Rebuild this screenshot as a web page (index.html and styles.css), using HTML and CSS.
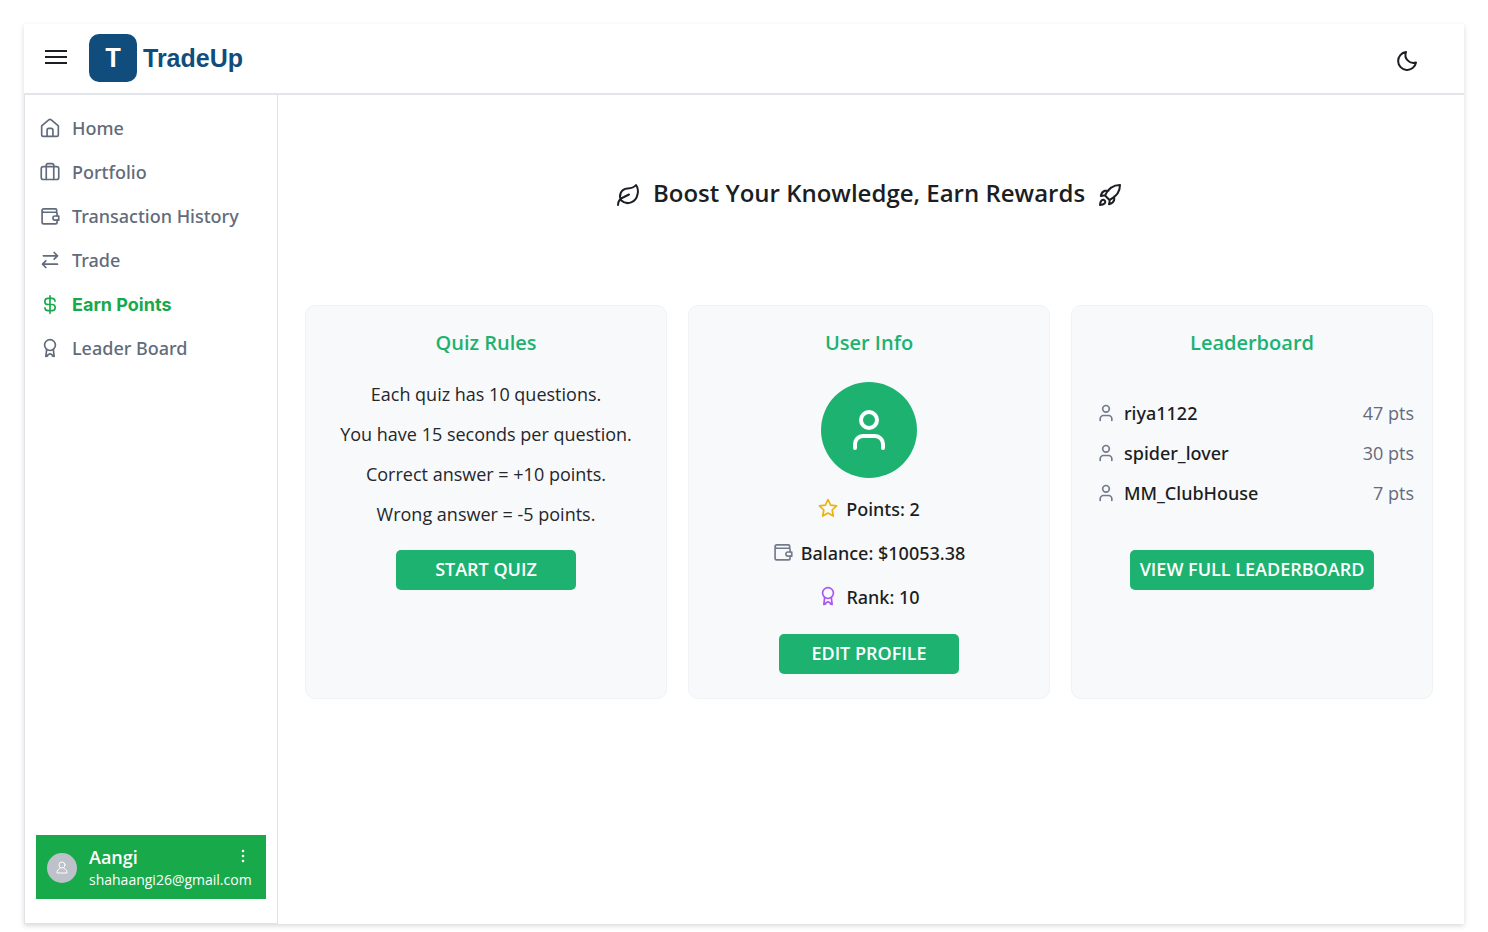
FILE: index.html
```html
<!DOCTYPE html>
<html lang="en">
<head>
<meta charset="utf-8">
<title>TradeUp</title>
<link rel="stylesheet" href="styles.css">
</head>
<body>
<svg class="sprite" aria-hidden="true">
  <symbol id="wallet" viewBox="0 0 24 24"><path d="M20 8V5a1.500 1.500 0 0 0-1.500-1.500H4.500a2 2 0 0 0 0 4H19A1.500 1.500 0 0 1 20.500 9v3M2.500 5.500v14A2 2 0 0 0 4.500 21.500H18.500a2 2 0 0 0 2-2V17"/><path d="M22.500 12h-4.500a2.500 2.500 0 0 0 0 5h4.500z"/></symbol>
  <symbol id="award" viewBox="0 0 24 24"><circle cx="12" cy="8.500" r="6.500"/><path d="M8 14 7 22l2.200-.5.300-1.500 2.500-1.200 2.500 1.200.3 1.500L17 22l-1-8"/></symbol>
  <symbol id="user" viewBox="0 0 24 24"><circle cx="12" cy="7" r="4"/><path d="M5 21v-2a4 4 0 0 1 4-4h6a4 4 0 0 1 4 4v2"/></symbol>
</svg>
<div class="app">
  <header class="header">
    <button class="icon-button" aria-label="Toggle menu"><svg class="menu-icon" viewBox="0 0 24 24"><path d="M1 5h22M1 11h22M1 17h22"/></svg></button>
    <a class="brand" href="#"><span class="logo">T</span><span>TradeUp</span></a>
    <button class="icon-button theme" aria-label="Switch theme"><svg class="icon-24" viewBox="0 0 24 24"><path d="M11 3a9 9 0 1 0 10 10.500A8 8 0 0 1 11 3z"/></svg></button>
  </header>
  <div class="body">
    <aside class="sidebar">
      <nav class="nav">
        <a href="#"><svg viewBox="0 0 24 24"><path d="M2 9.500 10.500 2.300a2.300 2.300 0 0 1 3 0L22 9.500V20a2 2 0 0 1-2 2H4a2 2 0 0 1-2-2zM8.500 22v-7.500a2 2 0 0 1 2-2h3a2 2 0 0 1 2 2V22"/></svg>Home</a>
        <a href="#"><svg viewBox="0 0 24 24"><rect x="1.500" y="5.500" width="21" height="15.500" rx="2.500"/><path d="M7.500 21V4a2 2 0 0 1 2-2h5a2 2 0 0 1 2 2v17"/></svg>Portfolio</a>
        <a href="#"><svg><use href="#wallet"/></svg>Transaction History</a>
        <a href="#"><svg viewBox="0 0 24 24"><path d="m17 3 4 4-4 4M21 7H4M7 21l-4-4 4-4M3 17h18"/></svg>Trade</a>
        <a class="active" href="#"><svg viewBox="0 0 24 24"><path d="M12 1v21M18 7.500a3.500 3.500 0 0 0-3.500-3.500h-5a3.700 3.700 0 0 0 0 7.400h5a3.700 3.700 0 0 1 0 7.400h-5A3.500 3.500 0 0 1 6 15.500"/></svg>Earn Points</a>
        <a href="#"><svg><use href="#award"/></svg>Leader Board</a>
      </nav>
      <div class="account">
        <span class="account-avatar"><svg viewBox="0 0 14 14"><circle cx="7" cy="4" r="3"/><path d="M5 7.500C3 8 2 9.500 2 12h10c0-2.500-1-4-3-4.500"/></svg></span>
        <div class="account-text"><strong>Aangi</strong><span>shahaangi26@gmail.com</span></div>
        <button class="more" aria-label="Account options"><svg viewBox="0 0 16 16"><circle cx="8" cy="3" r="1.300"/><circle cx="8" cy="8" r="1.300"/><circle cx="8" cy="13" r="1.300"/></svg></button>
      </div>
    </aside>
    <main class="main">
      <h1 class="title">
        <svg class="icon-24" viewBox="0 0 24 24"><path d="M2 22c0-4 2-6.500 6-8l5-2.500M5.300 17.500C2.500 13 4.500 6 11.500 5.500c4-.3 6.500-1 8.500-3.500 2 3 2.300 6.500 1.500 9.500C20 19 11.500 23 5.300 17.500z"/></svg>
        <span>Boost Your Knowledge, Earn Rewards</span>
        <svg class="icon-24" viewBox="0 0 24 24"><path d="M22 2C15 2 10 6 7 12.500l4.500 4.500C18 14 22 9 22 2zM10.500 7.800H7C4.800 8.500 3.300 10.500 2.800 13c1.500-.6 3-.7 4.200-.5M16.200 13.500V17c-.7 2.200-2.700 3.700-5.200 4.200.6-1.500.7-3 .5-4.200M3.500 17.500C2.300 18.700 2 22 2 22s3.300-.3 4.500-1.500c.9-.9 1-2.200.2-3s-2.300-.9-3.200 0z"/></svg>
      </h1>
      <div class="cards">
        <section class="card">
          <h2>Quiz Rules</h2>
          <ul class="rules">
            <li>Each quiz has 10 questions.</li>
            <li>You have 15 seconds per question.</li>
            <li>Correct answer = +10 points.</li>
            <li>Wrong answer = -5 points.</li>
          </ul>
          <button class="action">START QUIZ</button>
        </section>
        <section class="card">
          <h2>User Info</h2>
          <div class="avatar"><svg><use href="#user"/></svg></div>
          <ul class="stats">
            <li><svg class="star" viewBox="0 0 24 24"><path d="m12 1.800 3.100 6.700 7.200.9-5.300 5 1.400 7.300L12 18l-6.400 3.700L7 14.400 1.700 9.400l7.200-.9z"/></svg>Points: 2</li>
            <li><svg class="gray"><use href="#wallet"/></svg>Balance: $10053.38</li>
            <li><svg class="purple"><use href="#award"/></svg>Rank: 10</li>
          </ul>
          <button class="action">EDIT PROFILE</button>
        </section>
        <section class="card">
          <h2>Leaderboard</h2>
          <ol class="leaders">
            <li><svg><use href="#user"/></svg><span class="name">riya1122</span><span class="points">47 pts</span></li>
            <li><svg><use href="#user"/></svg><span class="name">spider_lover</span><span class="points">30 pts</span></li>
            <li><svg><use href="#user"/></svg><span class="name">MM_ClubHouse</span><span class="points">7 pts</span></li>
          </ol>
          <button class="action">VIEW FULL LEADERBOARD</button>
        </section>
      </div>
    </main>
  </div>
</div>
</body>
</html>
```
FILE: styles.css
```css
* { box-sizing: border-box; }
body {
  margin: 0;
  padding: 24px 24px 8px;
  min-height: 100vh;
  display: flex;
  background: #fff;
  color: #1b1e22;
  font: 18px/28px "Open Sans", sans-serif;
}
svg { fill: none; stroke: currentColor; stroke-width: 2; stroke-linecap: round; stroke-linejoin: round; flex: none; }
.sprite { position: absolute; width: 0; height: 0; }
h1, h2, ul, ol { margin: 0; padding: 0; list-style: none; }
button { font: inherit; border: 0; padding: 0; cursor: pointer; color: inherit; background: none; }
a { color: inherit; text-decoration: none; }
.icon-24 { width: 24px; height: 24px; }
.app { flex: 1; display: flex; flex-direction: column; box-shadow: 0 2px 5px rgba(0, 0, 0, 0.15); }
.header { height: 71px; padding: 0 45px 2px 20px; display: flex; align-items: center; border-bottom: 2px solid #e2e5e9; }
.icon-button { display: flex; }
.menu-icon { width: 24px; height: 24px; stroke-linecap: butt; }
.theme { margin: 6px 0 0 auto; }
.brand { display: flex; align-items: center; gap: 6px; margin-left: 21px; color: #104d7c; font: bold 25px/32px "Liberation Sans", sans-serif; }
.logo { width: 48px; height: 48px; border-radius: 10px; display: grid; place-items: center; background: #104d7c; color: #fff; font-family: Inter, sans-serif; }
.body { flex: 1; display: flex; }
.sidebar { width: 254px; padding: 12px 11px 24px; border: 1px solid #dfe2e6; border-top: 0; display: flex; flex-direction: column; justify-content: space-between; }
.nav a { height: 44px; padding: 0 0 2px 4px; display: flex; align-items: center; gap: 12px; color: #626b7a; font-family: "Noto Sans", sans-serif; font-weight: 500; }
.nav svg { width: 20px; height: 20px; }
.nav .active { padding-bottom: 0; color: #18a94a; font-family: Inter, sans-serif; font-weight: 700; }
.account { height: 64px; padding: 10px 14px 10px 11px; display: flex; align-items: center; gap: 12px; background: #18a94a; color: #fff; position: relative; }
.account-avatar { width: 30px; height: 30px; margin-top: 2px; border-radius: 50%; background: #bdc1ca; display: grid; place-items: center; }
.account-avatar svg { width: 14px; height: 14px; stroke-width: 1; }
.account-text { display: flex; flex-direction: column; font-size: 14px; line-height: 20px; }
.account-text strong { font-size: 18px; line-height: 26px; font-weight: 600; }
.more { position: absolute; top: 13px; right: 15px; display: flex; }
.more svg { width: 16px; height: 16px; fill: currentColor; stroke: none; }
.main { flex: 1; padding: 80px 31px 40px 27px; }
.title { display: flex; align-items: center; justify-content: center; gap: 13px; font-size: 24px; line-height: 36px; font-weight: 600; }
.title .icon-24 { margin-top: 3px; }
.cards { margin-top: 94px; display: grid; grid-template-columns: repeat(3, 1fr); gap: 21px; }
.card { min-height: 394px; padding: 22px 18px 24px; border: 1px solid #f0f2f4; border-radius: 10px; background: #f8f9fb; display: flex; flex-direction: column; align-items: center; }
.card h2 { color: #1db270; font-size: 20px; line-height: 30px; font-weight: 600; }
.rules { margin: 16px 0; text-align: center; color: #24272b; }
.rules li { line-height: 40px; }
.avatar { width: 96px; height: 96px; margin: 24px 0 9px; border-radius: 50%; display: grid; place-items: center; background: #1db270; color: #fff; }
.avatar svg { width: 48px; height: 48px; }
.stats { margin-bottom: 15px; }
.stats li { height: 44px; display: flex; align-items: center; justify-content: center; gap: 8px; font-family: "Noto Sans", sans-serif; font-weight: 500; }
.stats svg { width: 20px; height: 20px; margin-bottom: 2px; }
.star { color: #eab308; }
.gray { color: #737b8b; }
.purple { color: #a855f7; }
.leaders { align-self: stretch; margin: 35px 0 37px; padding-left: 6px; }
.leaders li { height: 40px; display: flex; align-items: center; gap: 8px; }
.leaders svg { width: 20px; height: 20px; color: #737b8b; }
.leaders .name { font-family: "Noto Sans", sans-serif; font-weight: 500; }
.leaders .points { margin-left: auto; color: #646b7a; }
.action { min-width: 180px; height: 40px; padding: 0 10px 2px; border-radius: 5px; background: #1db270; color: #fff; font-weight: 600; }
```
